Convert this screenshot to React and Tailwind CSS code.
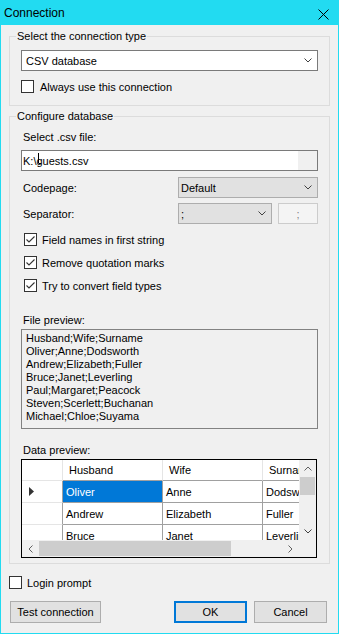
import React from "react";

const Chevron = ({ className = "" }) => (
  <svg width="8" height="5" viewBox="0 0 8 5" className={className}>
    <polyline points="0.5,0.5 4,4 7.5,0.5" fill="none" stroke="#404040" strokeWidth="1" />
  </svg>
);

const Check = ({ checked }) => (
  <div className="w-[13px] h-[13px] border border-[#333333] bg-white shrink-0 flex items-center justify-center">
    {checked && (
      <svg width="11" height="11" viewBox="0 0 11 11">
        <polyline points="1.5,5.5 4,8 9.5,2.5" fill="none" stroke="#333333" strokeWidth="1.1" />
      </svg>
    )}
  </div>
);

const CheckRow = ({ checked, label, className = "" }) => (
  <div className={"flex items-center h-[17px] gap-[5px] " + className}>
    <Check checked={checked} />
    <span className="leading-[14px]">{label}</span>
  </div>
);

const rows = [
  ["Oliver", "Anne", "Dodsworth"],
  ["Andrew", "Elizabeth", "Fuller"],
  ["Bruce", "Janet", "Leverling"],
];

const preview = [
  "Husband;Wife;Surname",
  "Oliver;Anne;Dodsworth",
  "Andrew;Elizabeth;Fuller",
  "Bruce;Janet;Leverling",
  "Paul;Margaret;Peacock",
  "Steven;Scerlett;Buchanan",
  "Michael;Chloe;Suyama",
];

function Grid() {
  return (
    <div className="border border-black w-[296px] h-[99px] flex flex-col bg-white">
      <div className="flex h-[80px]">
        <div className="w-[277px] h-[80px] overflow-hidden">
          <div className="flex h-[21px] w-[341px]">
            <div className="w-[41px] shrink-0 border-r border-b border-r-[#e5e5e5] border-b-[#e5e5e5]" />
            {["Husband", "Wife", "Surname"].map((h) => (
              <div key={h} className="w-[100px] shrink-0 border-r border-b border-r-[#e5e5e5] border-b-[#a0a0a0] pl-[6px] flex items-center leading-[14px]">
                {h}
              </div>
            ))}
          </div>
          {rows.map((r, i) => (
            <div key={i} className="flex h-[22px] w-[341px]">
              <div className="w-[41px] shrink-0 border-r border-b border-r-[#a0a0a0] border-b-[#e5e5e5] flex items-center pl-[7px]">
                {i === 0 && (
                  <svg width="5" height="9" viewBox="0 0 5 9">
                    <polygon points="0,0 5,4.5 0,9" fill="#333333" />
                  </svg>
                )}
              </div>
              {r.map((c, j) => (
                <div
                  key={j}
                  className={
                    "w-[100px] shrink-0 border-r border-b border-[#a0a0a0] pl-[3px] flex items-center leading-[14px] whitespace-nowrap " +
                    (i === 0 && j === 0 ? "bg-[#0078d7] text-white" : "")
                  }
                >
                  {c}
                </div>
              ))}
            </div>
          ))}
        </div>
        <div className="w-[17px] h-[80px] bg-[#f0f0f0] flex flex-col">
          <div className="h-[17px] flex items-center justify-center">
            <svg width="8" height="5" viewBox="0 0 8 5">
              <polyline points="0.5,4.5 4,1 7.5,4.5" fill="none" stroke="#606060" strokeWidth="1" />
            </svg>
          </div>
          <div className="flex-1">
            <div className="h-[18px] mx-[1px] bg-[#cdcdcd]" />
          </div>
          <div className="h-[17px] flex items-center justify-center">
            <Chevron />
          </div>
        </div>
      </div>
      <div className="flex h-[17px] bg-[#f0f0f0]">
        <div className="w-[17px] flex items-center justify-center">
          <svg width="5" height="8" viewBox="0 0 5 8">
            <polyline points="4.5,0.5 1,4 4.5,7.5" fill="none" stroke="#606060" strokeWidth="1" />
          </svg>
        </div>
        <div className="w-[243px] flex items-center">
          <div className="w-[192px] h-[15px] bg-[#cdcdcd]" />
        </div>
        <div className="w-[17px] flex items-center justify-center">
          <svg width="5" height="8" viewBox="0 0 5 8">
            <polyline points="0.5,0.5 4,4 0.5,7.5" fill="none" stroke="#606060" strokeWidth="1" />
          </svg>
        </div>
        <div className="w-[17px]" />
      </div>
    </div>
  );
}

export default function App() {
  return (
    <div className="w-[339px] h-[634px] bg-[#22dbf1] flex flex-col px-[1px] pb-[1px] text-[11px] text-black font-['Liberation_Sans',Arial,sans-serif] overflow-hidden">
      <div className="h-[25px] flex items-start justify-between shrink-0">
        <span className="text-[12px] leading-[16px] pl-[3px] pt-[5px]">Connection</span>
        <svg width="11" height="11" viewBox="0 0 11 11" className="mt-[9px] mr-[9px]">
          <line x1="0.5" y1="0.5" x2="10.5" y2="10.5" stroke="#000" strokeWidth="1" />
          <line x1="10.5" y1="0.5" x2="0.5" y2="10.5" stroke="#000" strokeWidth="1" />
        </svg>
      </div>
      <div className="flex-1 bg-[#f0f0f0] px-[8px] pt-[4px] flex flex-col">
        <fieldset className="border border-[#dcdcdc]">
          <legend className="ml-[6px] px-[1px] leading-[14px]">Select the connection type</legend>
          <div className="px-[11px] pt-[7px] pb-[10px]">
            <div className="h-[21px] bg-white border border-[#7a7a7a] flex items-center justify-between pl-[4px] pr-[5px]">
              <span className="leading-[14px]">CSV database</span>
              <Chevron />
            </div>
            <CheckRow label="Always use this connection" className="mt-[7px] gap-[6px]" />
          </div>
        </fieldset>

        <fieldset className="border border-[#dcdcdc] mt-[3px]">
          <legend className="ml-[6px] px-[1px] leading-[14px]">Configure database</legend>
          <div className="px-[11px] pt-[7px] pb-[5px] flex flex-col">
            <div className="pl-[2px] leading-[14px]">Select .csv file:</div>
            <div className="relative mt-[6px] h-[21px] border border-[#7a7a7a] flex">
              <div className="flex-1 bg-white pl-[1px] flex items-center leading-[14px]">K:\guests.csv</div>
              <div className="w-[19px] bg-[#f0f0f0]" />
              <svg width="5" height="12" viewBox="0 0 5 12" className="absolute left-[15px] top-[2px]">
                <line x1="1.5" y1="0" x2="1.5" y2="10" stroke="#000" strokeWidth="1" />
                <line x1="1.5" y1="10.5" x2="4" y2="10.5" stroke="#000" strokeWidth="1" />
              </svg>
            </div>
            <div className="mt-[6px] flex items-center">
              <span className="flex-1 pl-[2px] leading-[14px]">Codepage:</span>
              <div className="w-[140px] h-[21px] bg-[#e1e1e1] border border-[#adadad] flex items-center justify-between pl-[2px] pr-[5px]">
                <span className="leading-[14px]">Default</span>
                <Chevron />
              </div>
            </div>
            <div className="mt-[5px] flex items-center">
              <span className="flex-1 pl-[2px] leading-[14px]">Separator:</span>
              <div className="w-[94px] h-[21px] bg-[#e1e1e1] border border-[#adadad] flex items-center justify-between pl-[2px] pr-[5px]">
                <span className="leading-[14px]">;</span>
                <Chevron />
              </div>
              <div className="ml-[6px] w-[40px] h-[21px] bg-[#f4f4f4] border border-[#cccccc] flex items-center justify-center text-[#838383] leading-[14px]">
                ;
              </div>
            </div>
            <div className="pl-[3px] mt-[7px] flex flex-col gap-[6px]">
              <CheckRow checked label="Field names in first string" />
              <CheckRow checked label="Remove quotation marks" />
              <CheckRow checked label="Try to convert field types" />
            </div>
            <div className="mt-[19px] pl-[2px] leading-[14px]">File preview:</div>
            <div className="mt-[2px] h-[100px] border border-[#828282] pl-[4px] pt-[2px]">
              {preview.map((l) => (
                <div key={l} className="leading-[13px]">{l}</div>
              ))}
            </div>
            <div className="mt-[14px] pl-[2px] leading-[14px]">Data preview:</div>
            <div className="mt-[2px]">
              <Grid />
            </div>
          </div>
        </fieldset>

        <CheckRow label="Login prompt" className="mt-[10px]" />

        <div className="mt-[10px] flex items-center">
          <div className="ml-[1px] w-[91px] h-[22px] bg-[#e1e1e1] border border-[#adadad] flex items-center justify-center leading-[14px]">
            Test connection
          </div>
          <div className="flex-1" />
          <div className="w-[73px] h-[22px] bg-[#e1e1e1] border-2 border-[#0078d7] flex items-center justify-center leading-[14px]">
            OK
          </div>
          <div className="ml-[7px] mr-[3px] w-[73px] h-[22px] bg-[#e1e1e1] border border-[#adadad] flex items-center justify-center leading-[14px]">
            Cancel
          </div>
        </div>
      </div>
    </div>
  );
}
